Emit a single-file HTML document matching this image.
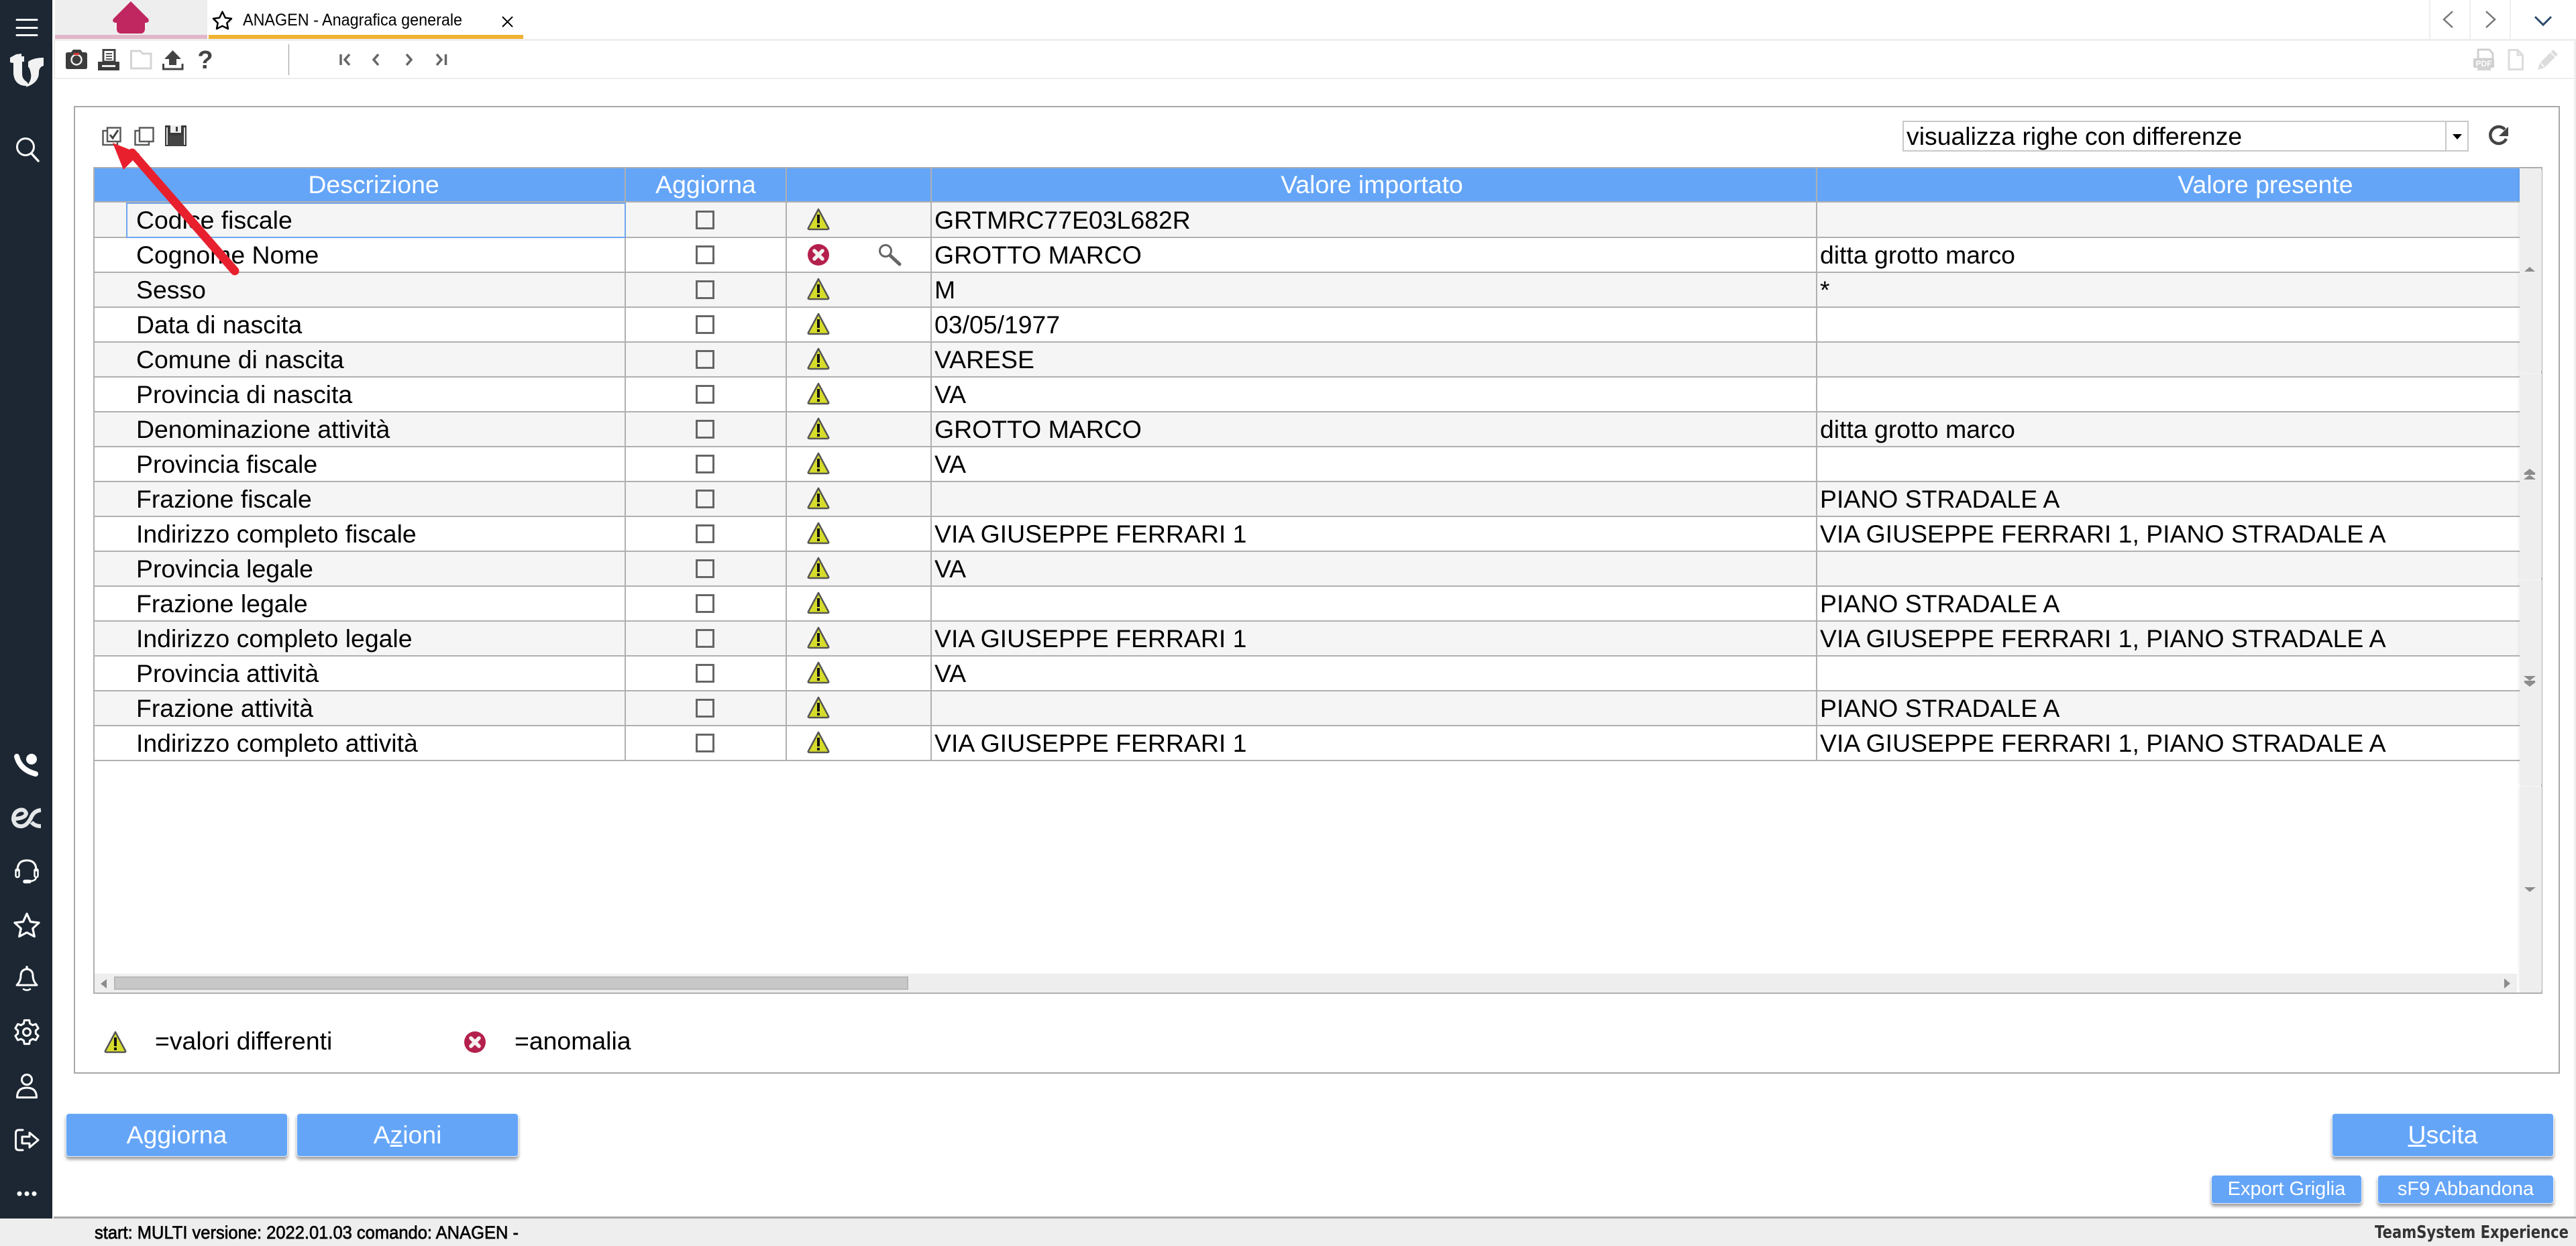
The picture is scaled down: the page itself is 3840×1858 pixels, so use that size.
<!DOCTYPE html>
<html lang="it"><head><meta charset="utf-8"><title>ANAGEN</title>
<style>
html,body{margin:0;padding:0;background:#fff;width:3840px;height:1858px;overflow:hidden}
body{position:relative;font-family:"Liberation Sans",Arial,sans-serif;color:#000}
div{position:absolute;box-sizing:border-box}
.t{font-size:37.4px;line-height:52px;height:52px;white-space:nowrap}
.d{left:203px;margin-top:1px}.v{left:1393px;margin-top:1px}.p{left:2713px;margin-top:1px}
.h{top:250px;height:51px;line-height:51px;font-size:37.4px;color:#fff;text-align:center;white-space:nowrap}
.r{left:141px;width:3615px;height:52px}
.g{background:#f5f5f5}
.l{left:141px;width:3615px;height:2px;background:#b0b0b0}
.c{top:250px;width:2px;height:884px;background:#b0b0b0}
.b{background:#64a5f8;color:#fff;border:1px solid #e8f0fb;border-radius:5px;text-align:center;box-shadow:0 4px 5px rgba(0,0,0,.38);white-space:nowrap}
.b1{top:1660px;height:65px;font-size:37.4px;line-height:62px}
.b2{top:1752px;height:43px;font-size:29px;line-height:40px}
.s{left:3756px;width:33px;background:#eee;border-radius:0 0 4px 4px;box-shadow:-2px 0 3px rgba(0,0,0,.05)}
svg{position:absolute;left:0;top:0}
</style></head><body>

<!-- tabs -->
<div style="left:82px;top:0;width:227px;height:52px;background:#eee"></div>
<div style="left:82px;top:52px;width:227px;height:6px;background:#e3b6c9"></div>
<div style="left:311px;top:52px;width:469px;height:6px;background:#f0b232"></div>
<div style="left:80px;top:58px;width:3760px;height:3px;background:#eee"></div>
<div style="left:3621px;top:0;width:2px;height:58px;background:#eee"></div>
<div style="left:3681px;top:0;width:2px;height:58px;background:#eee"></div>
<div style="left:3741px;top:0;width:2px;height:58px;background:#eee"></div>
<!-- toolbar -->
<div style="left:80px;top:61px;width:2px;height:57px;background:#eee"></div>
<div style="left:80px;top:116px;width:3758px;height:2px;background:#eee"></div>
<div style="left:3837px;top:61px;width:3px;height:1753px;background:#eee"></div>
<div style="left:430px;top:66px;width:1px;height:46px;background:#999"></div>

<!-- panel -->
<div style="left:110px;top:158px;width:3706px;height:1443px;border:2px solid #a8a8a8"></div>

<!-- select -->
<div style="left:2836px;top:180px;width:844px;height:46px;border:2px solid #c8c8c8"></div>
<div style="left:3645px;top:180px;width:2px;height:46px;background:#c8c8c8"></div>
<div class="t" style="left:2842px;top:177px">visualizza righe con differenze</div>

<!-- grid -->
<div style="left:139px;top:249px;width:3651px;height:1233px;border:2px solid #b0b0b0"></div>
<div style="left:141px;top:251px;width:3615px;height:50px;background:#64a5f8"></div>
<div class="r g" style="top:302px"></div>
<div class="r g" style="top:406px"></div>
<div class="r g" style="top:510px"></div>
<div class="r g" style="top:614px"></div>
<div class="r g" style="top:718px"></div>
<div class="r g" style="top:822px"></div>
<div class="r g" style="top:926px"></div>
<div class="r g" style="top:1030px"></div>
<div class="l" style="top:300px"></div>
<div class="l" style="top:353px"></div><div class="l" style="top:405px"></div><div class="l" style="top:457px"></div><div class="l" style="top:509px"></div>
<div class="l" style="top:561px"></div><div class="l" style="top:613px"></div><div class="l" style="top:665px"></div><div class="l" style="top:717px"></div>
<div class="l" style="top:769px"></div><div class="l" style="top:821px"></div><div class="l" style="top:873px"></div><div class="l" style="top:925px"></div>
<div class="l" style="top:977px"></div><div class="l" style="top:1029px"></div><div class="l" style="top:1081px"></div><div class="l" style="top:1133px"></div>
<div class="c" style="left:931px"></div><div class="c" style="left:1171px"></div><div class="c" style="left:1387px"></div><div class="c" style="left:2707px"></div>
<div style="left:188px;top:302px;width:745px;height:53px;border:2px solid #6ea6ee"></div>

<div class="h" style="left:357px;width:400px">Descrizione</div>
<div class="h" style="left:932px;width:240px">Aggiorna</div>
<div class="h" style="left:1845px;width:400px">Valore importato</div>
<div class="h" style="left:3177px;width:400px">Valore presente</div>

<div class="t d" style="top:301px">Codice fiscale</div><div class="t v" style="top:301px">GRTMRC77E03L682R</div>
<div class="t d" style="top:353px">Cognome Nome</div><div class="t v" style="top:353px">GROTTO MARCO</div><div class="t p" style="top:353px">ditta grotto marco</div>
<div class="t d" style="top:405px">Sesso</div><div class="t v" style="top:405px">M</div><div class="t p" style="top:405px">*</div>
<div class="t d" style="top:457px">Data di nascita</div><div class="t v" style="top:457px">03/05/1977</div>
<div class="t d" style="top:509px">Comune di nascita</div><div class="t v" style="top:509px">VARESE</div>
<div class="t d" style="top:561px">Provincia di nascita</div><div class="t v" style="top:561px">VA</div>
<div class="t d" style="top:613px">Denominazione attività</div><div class="t v" style="top:613px">GROTTO MARCO</div><div class="t p" style="top:613px">ditta grotto marco</div>
<div class="t d" style="top:665px">Provincia fiscale</div><div class="t v" style="top:665px">VA</div>
<div class="t d" style="top:717px">Frazione fiscale</div><div class="t p" style="top:717px">PIANO STRADALE A</div>
<div class="t d" style="top:769px">Indirizzo completo fiscale</div><div class="t v" style="top:769px">VIA GIUSEPPE FERRARI 1</div><div class="t p" style="top:769px">VIA GIUSEPPE FERRARI 1, PIANO STRADALE A</div>
<div class="t d" style="top:821px">Provincia legale</div><div class="t v" style="top:821px">VA</div>
<div class="t d" style="top:873px">Frazione legale</div><div class="t p" style="top:873px">PIANO STRADALE A</div>
<div class="t d" style="top:925px">Indirizzo completo legale</div><div class="t v" style="top:925px">VIA GIUSEPPE FERRARI 1</div><div class="t p" style="top:925px">VIA GIUSEPPE FERRARI 1, PIANO STRADALE A</div>
<div class="t d" style="top:977px">Provincia attività</div><div class="t v" style="top:977px">VA</div>
<div class="t d" style="top:1029px">Frazione attività</div><div class="t p" style="top:1029px">PIANO STRADALE A</div>
<div class="t d" style="top:1081px">Indirizzo completo attività</div><div class="t v" style="top:1081px">VIA GIUSEPPE FERRARI 1</div><div class="t p" style="top:1081px">VIA GIUSEPPE FERRARI 1, PIANO STRADALE A</div>

<!-- scrollbars -->
<div style="left:141px;top:1452px;width:3611px;height:28px;background:#eee"></div>
<div style="left:170px;top:1456px;width:1184px;height:20px;background:#c8c8c8;border:2px solid #b8b8b8"></div>
<div class="s" style="top:251px;height:305px;border-radius:4px 4px 4px 4px"></div>
<div class="s" style="top:557px;height:307px"></div>
<div class="s" style="top:865px;height:307px"></div>
<div class="s" style="top:1173px;height:307px"></div>

<!-- legend -->
<div class="t" style="left:231px;top:1526px">=valori differenti</div>
<div class="t" style="left:767px;top:1526px">=anomalia</div>

<!-- buttons -->
<div class="b b1" style="left:98px;width:331px">Aggiorna</div>
<div class="b b1" style="left:442px;width:331px">A<u>z</u>ioni</div>
<div class="b b1" style="left:3476px;width:331px"><u>U</u>scita</div>
<div class="b b2" style="left:3296px;width:225px">Export Griglia</div>
<div class="b b2" style="left:3544px;width:263px">sF9 Abbandona</div>

<!-- status -->
<div style="left:80px;top:1814px;width:3760px;height:3px;background:#a8a8a8"></div>
<div style="left:0;top:1817px;width:3840px;height:41px;background:#eee"></div>
<!-- sidebar -->
<div style="left:0;top:0;width:78px;height:1817px;background:#1c2733"></div>

<svg width="3840" height="1858" viewBox="0 0 3840 1858" xmlns="http://www.w3.org/2000/svg">
<defs>
<g id="w"><path d="M16 1 L31 29 Q32 31 29 31 H3 Q0 31 1 29 Z" fill="#d6dc2a" stroke="#555" stroke-width="2.500" stroke-linejoin="round"/><rect x="14" y="9" width="4" height="13" fill="#111"/><rect x="14" y="24" width="4" height="4" fill="#111"/></g>
<g id="e"><circle cx="16" cy="16" r="16" fill="#b4204c"/><path d="M10 10 L22 22 M22 10 L10 22" stroke="#f4f0f0" stroke-width="5.500" stroke-linecap="round"/></g>
<rect id="k" x="-12.500" y="-12.500" width="25" height="25" fill="none" stroke="#666" stroke-width="3"/>
</defs>

<!-- checkboxes -->
<g>
<use href="#k" x="1051" y="328"/><use href="#k" x="1051" y="380"/><use href="#k" x="1051" y="432"/><use href="#k" x="1051" y="484"/>
<use href="#k" x="1051" y="536"/><use href="#k" x="1051" y="588"/><use href="#k" x="1051" y="640"/><use href="#k" x="1051" y="692"/>
<use href="#k" x="1051" y="744"/><use href="#k" x="1051" y="796"/><use href="#k" x="1051" y="848"/><use href="#k" x="1051" y="900"/>
<use href="#k" x="1051" y="952"/><use href="#k" x="1051" y="1004"/><use href="#k" x="1051" y="1056"/><use href="#k" x="1051" y="1108"/>
</g>
<!-- status icons -->
<use href="#w" x="1204" y="311"/><use href="#e" x="1204" y="364"/><use href="#w" x="1204" y="415"/><use href="#w" x="1204" y="467"/>
<use href="#w" x="1204" y="519"/><use href="#w" x="1204" y="571"/><use href="#w" x="1204" y="623"/><use href="#w" x="1204" y="675"/>
<use href="#w" x="1204" y="727"/><use href="#w" x="1204" y="779"/><use href="#w" x="1204" y="831"/><use href="#w" x="1204" y="883"/>
<use href="#w" x="1204" y="935"/><use href="#w" x="1204" y="987"/><use href="#w" x="1204" y="1039"/><use href="#w" x="1204" y="1091"/>
<use href="#w" x="156" y="1538"/><use href="#e" x="692" y="1538"/>
<!-- magnifier -->
<circle cx="1320" cy="374" r="8.500" fill="#fff" stroke="#666" stroke-width="3"/><path d="M1327 381 L1341 394" stroke="#666" stroke-width="5" stroke-linecap="round"/>

<!-- sidebar icons -->
<g fill="none" stroke="#fff" stroke-linecap="round" stroke-linejoin="round">
<path d="M25 29.500 H55 M25 41.500 H55 M25 52.500 H55" stroke-width="3"/>
<circle cx="38" cy="219" r="12.500" stroke-width="3"/><path d="M47 229 L57 240" stroke-width="3.500"/>
<path d="M25 1128 Q30 1148 53 1154" stroke-width="8"/>
<circle cx="47" cy="1132" r="8" fill="#fff" stroke="none"/>
<path d="M22 1221 Q38 1220 39 1213 Q37 1206 29 1208 Q20 1211 20 1222 Q22 1233 33 1232 Q40 1231 46 1220 Q50 1209 61 1208 M61 1232 Q52 1232 47 1226" stroke="#e4e6e8" stroke-width="6" stroke-linecap="butt"/>
<path d="M26 1298 Q26 1283 40 1283 Q54 1283 54 1298" stroke-width="3"/>
<rect x="23.500" y="1296" width="5" height="12" rx="2" stroke-width="2.500"/><rect x="51.500" y="1296" width="5" height="12" rx="2" stroke-width="2.500"/>
<path d="M54 1308 Q53 1314 44 1314" stroke-width="2.500"/><path d="M37 1314.500 H44" stroke-width="5.500"/>
<path d="M40 1362.500 L45.500 1374.500 L58 1376 L48.800 1384.500 L51.300 1396.500 L40 1390.500 L28.700 1396.500 L31.200 1384.500 L22 1376 L34.500 1374.500 Z" stroke-width="3.200"/>
<path d="M25 1469 Q31 1463 31 1455 Q31 1446 40 1445 Q49 1446 49 1455 Q49 1463 55 1469 Z" stroke-width="3"/><path d="M40 1442 V1444" stroke-width="3.500"/><path d="M35 1475 Q40 1478 45 1475" stroke-width="2.500"/>
<g transform="translate(40,1539)" stroke-width="3"><path d="M-4.600 -12.700 L-3.700 -17.600 L3.700 -17.600 L4.600 -12.700 L8.700 -10.300 L13.400 -12 L17.100 -5.600 L13.300 -2.300 L13.300 2.300 L17.100 5.600 L13.400 12 L8.700 10.300 L4.600 12.700 L3.700 17.600 L-3.700 17.600 L-4.600 12.700 L-8.700 10.300 L-13.400 12 L-17.100 5.600 L-13.300 2.300 L-13.300 -2.300 L-17.100 -5.600 L-13.400 -12 L-8.700 -10.300 Z"/><circle r="5.500"/></g>
<circle cx="40" cy="1610" r="7.500" stroke-width="3"/><path d="M25.500 1636.500 Q25.500 1622 40 1622 Q54.500 1622 54.500 1636.500 Z" stroke-width="3"/>
<path d="M34 1685 H28 Q23.500 1685 23.500 1690 V1710 Q23.500 1715 28 1715 H34" stroke-width="3"/><path d="M33 1695 H44 V1689 L57 1700 L44 1711 V1705 H33 Z" stroke-width="3"/>
</g>
<circle cx="29" cy="1780" r="3.500" fill="#fff"/><circle cx="40" cy="1780" r="3.500" fill="#fff"/><circle cx="51" cy="1780" r="3.500" fill="#fff"/>
<!-- ts logo -->
<path d="M15 86 L24 81 L32 80 V84 L36 84 V92 L33 92 V110 Q33 118 40 122 L44 128 Q22 130 20 110 V94 L15 93 Z" fill="#f2f2f2"/>
<path d="M42 92 Q50 86 65 86 V98 Q58 100 58 108 Q58 124 38 130 Q48 120 46 110 Q44 100 42 100 Z" fill="#f2f2f2"/>

<!-- tab icons -->
<path d="M195 2 L221 28 Q224 34 216 34 V43 Q216 50 209 50 H181 Q174 50 174 43 V34 Q166 34 169 28 Z" fill="#c0265f"/>
<path d="M331.500 17.500 L335.800 26.500 L345 27.800 L338.300 34.300 L340 43 L331.500 38.800 L323 43 L324.700 34.300 L318 27.800 L327.200 26.500 Z" fill="none" stroke="#000" stroke-width="2.500" stroke-linejoin="round"/>
<path d="M749 25 L764 40 M764 25 L749 40" stroke="#000" stroke-width="2"/>
<text x="362" y="38" font-size="25" font-family="Liberation Sans" textLength="327" lengthAdjust="spacingAndGlyphs" fill="#000">ANAGEN - Anagrafica generale</text>

<!-- top right chevrons -->
<path d="M3656 17 L3643 29 L3656 41" fill="none" stroke="#777" stroke-width="2.500"/>
<path d="M3706 17 L3719 29 L3706 41" fill="none" stroke="#777" stroke-width="2.500"/>
<path d="M3779 25 L3791 37 L3803 25" fill="none" stroke="#2b4a6b" stroke-width="3"/>

<!-- toolbar left -->
<path d="M98 81 Q98 78 101 78 H106 L109 74 H120 L123 78 H127 Q130 78 130 81 V100 Q130 103 127 103 H101 Q98 103 98 100 Z" fill="#3c3c3c"/>
<circle cx="114" cy="89" r="7.500" fill="#3c3c3c" stroke="#eee" stroke-width="2.500"/><rect x="110" y="79" width="8" height="3" fill="#d33"/>
<path d="M154 74.500 H171 V92 H154 Z" fill="#fff" stroke="#444" stroke-width="3"/><path d="M158 80 H167 M158 84 H167 M158 88 H167" stroke="#555" stroke-width="2"/>
<path d="M146 92 H178 V105 H146 Z" fill="#3c3c3c"/><rect x="152" y="97" width="20" height="3" fill="#eee"/>
<path d="M195.500 76 H209 L213 80 H225 V102 H195.500 Z" fill="#fff" stroke="#d4d4d4" stroke-width="3"/>
<path d="M257.500 75 L270 88 H263 V97 H252 V88 H245 Z" fill="#444"/><path d="M243.500 95 V103 H272 V95" fill="none" stroke="#444" stroke-width="3"/>
<text x="306" y="102" font-size="38" font-weight="bold" font-family="Liberation Sans" text-anchor="middle" fill="#444">?</text>
<g fill="none" stroke="#666" stroke-width="3.500">
<path d="M508 81 V97 M521 81 L514 89 L521 97"/><path d="M564 81 L557 89 L564 97"/><path d="M606 81 L613 89 L606 97"/><path d="M651 81 L658 89 L651 97 M664.500 81 V97"/>
</g>

<!-- toolbar right -->
<path d="M3694 74 H3711 L3716 80 V88 H3694 Z" fill="#fff" stroke="#d0d0d0" stroke-width="3"/>
<rect x="3687" y="87" width="31" height="14" rx="2" fill="#cfcfcf"/>
<rect x="3693" y="100" width="20" height="5" fill="#d4d4d4"/>
<text x="3702.500" y="99" font-size="12" font-weight="bold" font-family="Liberation Sans" text-anchor="middle" fill="#fff">PDF</text>
<path d="M3740 74.500 H3753 L3760.500 82 V103.500 H3740 Z M3753 74.500 V82 H3760.500" fill="#fff" stroke="#dcdcdc" stroke-width="3"/>
<path d="M3783 104 L3786 94 L3806 74 L3813 81 L3793 101 Z" fill="#dcdcdc"/><path d="M3787 94 L3793 100 M3802 78 L3809 85" stroke="#fff" stroke-width="1.500"/>

<!-- panel icons -->
<g fill="none" stroke="#5a5a5a" stroke-width="2.500">
<rect x="160" y="190.500" width="19.500" height="20.500" fill="#fff"/><path d="M160 195 H153.500 V216 H175 V211"/>
<path d="M164 201 L168 206 L176 194" stroke="#444" stroke-width="3"/>
<rect x="208" y="190.500" width="20.500" height="20.500" fill="#fff"/><path d="M208 195 H201.500 V216 H222 V211"/>
</g>
<path d="M246 187 H278 V218 H246 Z" fill="#3a3a3a"/><rect x="254" y="187" width="16" height="11" fill="#eee"/><rect x="262" y="189" width="3" height="7" fill="#3a3a3a"/><rect x="251" y="202" width="22" height="16" fill="#444"/><path d="M249 190 V216 M275 190 V216" stroke="#ddd" stroke-width="2"/>
<path d="M3656 200 H3670 L3663 208 Z" fill="#000"/>
<path d="M3734 193 A 12.500 12.500 0 1 0 3736 207" fill="none" stroke="#444" stroke-width="4.500"/><path d="M3739 189 V203 H3725 Z" fill="#444"/>

<!-- scroll arrows -->
<g fill="#8c8c8c">
<path d="M3771 398 L3779 405 H3763 Z"/>
<path d="M3771 699 L3780 706 H3762 Z M3771 708 L3780 715 H3762 Z"/><rect x="3763" y="706" width="16" height="2"/>
<path d="M3762 1008 H3780 L3771 1015 Z M3762 1017 H3780 L3771 1024 Z"/><rect x="3763" y="1015" width="16" height="2"/>
<path d="M3763 1323 H3780 L3771 1330 Z"/>
<path d="M159 1460 V1474 L150 1467 Z"/><path d="M3733 1459 V1474 L3742 1466.500 Z"/>
</g>

<!-- red arrow -->
<path d="M350 404 L197 228" stroke="#e8202e" stroke-width="13" stroke-linecap="round"/>
<path d="M168 213 L208 229 L184 253 Z" fill="#e8202e"/>

<!-- status text -->
<text x="141" y="1847" font-size="27" font-family="Liberation Sans" textLength="632" lengthAdjust="spacingAndGlyphs" stroke="#000" stroke-width=".7" fill="#000">start: MULTI versione: 2022.01.03 comando: ANAGEN -</text>
<text x="3540" y="1846" font-size="26" font-weight="bold" font-family="DejaVu Sans" textLength="289" lengthAdjust="spacingAndGlyphs" fill="#333">TeamSystem Experience</text>
</svg>
</body></html>
